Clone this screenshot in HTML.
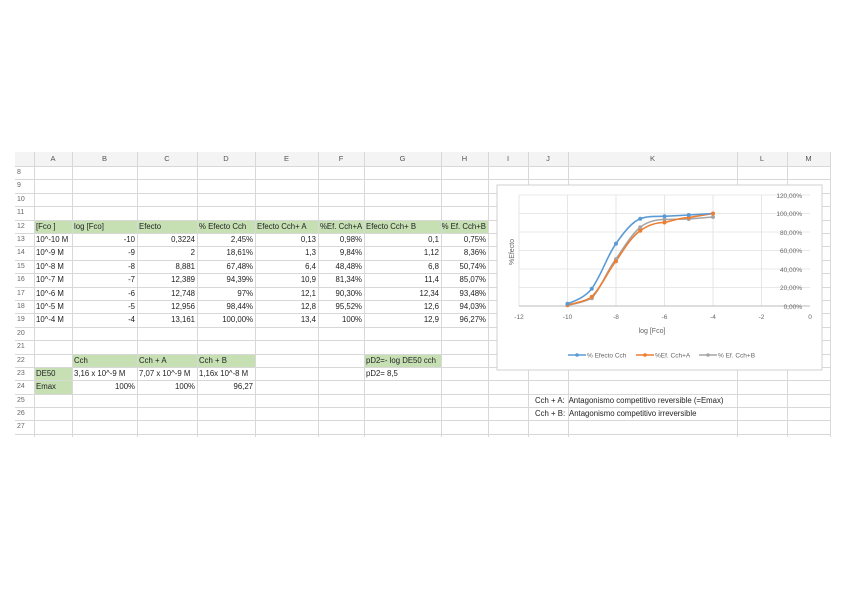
<!DOCTYPE html>
<html><head><meta charset="utf-8"><style>
body{margin:0;width:848px;height:599px;background:#fff;position:relative;overflow:hidden;font-family:"Liberation Sans",sans-serif;color:#222}
.c{position:absolute;height:13px;line-height:13px;font-size:7.8px;white-space:nowrap;overflow:visible}
.r{text-align:right}
.g{position:absolute;background:#c6e0b4}
.v{position:absolute;top:152px;height:285px;width:1px;background:#d8d8d8}
.h{position:absolute;left:15px;width:815px;height:1px;background:#d8d8d8}
.hd{position:absolute;top:152px;height:14px;line-height:14px;font-size:7.5px;color:#555;text-align:center}
.rn{position:absolute;left:15px;width:17px;font-size:7px;color:#666;height:13px;line-height:13px;padding-left:2px}
</style></head><body>
<div style="position:absolute;left:15px;top:152px;width:815px;height:14px;background:#f4f4f4"></div>
<div class="g" style="left:34px;top:220px;width:454px;height:13px"></div>
<div class="g" style="left:72px;top:354px;width:184px;height:13px"></div>
<div class="g" style="left:364px;top:354px;width:77px;height:13px"></div>
<div class="g" style="left:34px;top:367px;width:38px;height:27px"></div>
<div class="v" style="left:34px"></div><div class="v" style="left:72px"></div><div class="v" style="left:137px"></div><div class="v" style="left:197px"></div><div class="v" style="left:255px"></div><div class="v" style="left:318px"></div><div class="v" style="left:364px"></div><div class="v" style="left:441px"></div><div class="v" style="left:488px"></div><div class="v" style="left:528px"></div><div class="v" style="left:568px"></div><div class="v" style="left:737px"></div><div class="v" style="left:787px"></div><div class="v" style="left:830px"></div>
<div class="h" style="top:166px"></div><div class="h" style="top:179px"></div><div class="h" style="top:193px"></div><div class="h" style="top:206px"></div><div class="h" style="top:220px"></div><div class="h" style="top:233px"></div><div class="h" style="top:246px"></div><div class="h" style="top:260px"></div><div class="h" style="top:273px"></div><div class="h" style="top:287px"></div><div class="h" style="top:300px"></div><div class="h" style="top:313px"></div><div class="h" style="top:327px"></div><div class="h" style="top:340px"></div><div class="h" style="top:354px"></div><div class="h" style="top:367px"></div><div class="h" style="top:380px"></div><div class="h" style="top:394px"></div><div class="h" style="top:407px"></div><div class="h" style="top:420px"></div><div class="h" style="top:434px"></div>
<div class="hd" style="left:34px;width:38px">A</div><div class="hd" style="left:72px;width:65px">B</div><div class="hd" style="left:137px;width:60px">C</div><div class="hd" style="left:197px;width:58px">D</div><div class="hd" style="left:255px;width:63px">E</div><div class="hd" style="left:318px;width:46px">F</div><div class="hd" style="left:364px;width:77px">G</div><div class="hd" style="left:441px;width:47px">H</div><div class="hd" style="left:488px;width:40px">I</div><div class="hd" style="left:528px;width:40px">J</div><div class="hd" style="left:568px;width:169px">K</div><div class="hd" style="left:737px;width:50px">L</div><div class="hd" style="left:787px;width:43px">M</div>
<div class="rn" style="top:166px">8</div><div class="rn" style="top:179px">9</div><div class="rn" style="top:193px">10</div><div class="rn" style="top:206px">11</div><div class="rn" style="top:220px">12</div><div class="rn" style="top:233px">13</div><div class="rn" style="top:246px">14</div><div class="rn" style="top:260px">15</div><div class="rn" style="top:273px">16</div><div class="rn" style="top:287px">17</div><div class="rn" style="top:300px">18</div><div class="rn" style="top:313px">19</div><div class="rn" style="top:327px">20</div><div class="rn" style="top:340px">21</div><div class="rn" style="top:354px">22</div><div class="rn" style="top:367px">23</div><div class="rn" style="top:380px">24</div><div class="rn" style="top:394px">25</div><div class="rn" style="top:407px">26</div><div class="rn" style="top:420px">27</div>
<div class="c" style="left:36px;top:220px">[Fco ]</div><div class="c" style="left:74px;top:220px">log [Fco]</div><div class="c" style="left:139px;top:220px">Efecto</div><div class="c" style="left:199px;top:220px">% Efecto Cch</div><div class="c" style="left:257px;top:220px">Efecto Cch+ A</div><div class="c" style="left:320px;top:220px">%Ef. Cch+A</div><div class="c" style="left:366px;top:220px">Efecto Cch+ B</div><div class="c r" style="left:441px;width:45px;top:220px">% Ef. Cch+B</div>
<div class="c" style="left:36px;top:233px">10^-10 M</div><div class="c r" style="left:72px;width:63px;top:233px">-10</div><div class="c r" style="left:137px;width:58px;top:233px">0,3224</div><div class="c r" style="left:197px;width:56px;top:233px">2,45%</div><div class="c r" style="left:255px;width:61px;top:233px">0,13</div><div class="c r" style="left:318px;width:44px;top:233px">0,98%</div><div class="c r" style="left:364px;width:75px;top:233px">0,1</div><div class="c r" style="left:441px;width:45px;top:233px">0,75%</div>
<div class="c" style="left:36px;top:246px">10^-9 M</div><div class="c r" style="left:72px;width:63px;top:246px">-9</div><div class="c r" style="left:137px;width:58px;top:246px">2</div><div class="c r" style="left:197px;width:56px;top:246px">18,61%</div><div class="c r" style="left:255px;width:61px;top:246px">1,3</div><div class="c r" style="left:318px;width:44px;top:246px">9,84%</div><div class="c r" style="left:364px;width:75px;top:246px">1,12</div><div class="c r" style="left:441px;width:45px;top:246px">8,36%</div>
<div class="c" style="left:36px;top:260px">10^-8 M</div><div class="c r" style="left:72px;width:63px;top:260px">-8</div><div class="c r" style="left:137px;width:58px;top:260px">8,881</div><div class="c r" style="left:197px;width:56px;top:260px">67,48%</div><div class="c r" style="left:255px;width:61px;top:260px">6,4</div><div class="c r" style="left:318px;width:44px;top:260px">48,48%</div><div class="c r" style="left:364px;width:75px;top:260px">6,8</div><div class="c r" style="left:441px;width:45px;top:260px">50,74%</div>
<div class="c" style="left:36px;top:273px">10^-7 M</div><div class="c r" style="left:72px;width:63px;top:273px">-7</div><div class="c r" style="left:137px;width:58px;top:273px">12,389</div><div class="c r" style="left:197px;width:56px;top:273px">94,39%</div><div class="c r" style="left:255px;width:61px;top:273px">10,9</div><div class="c r" style="left:318px;width:44px;top:273px">81,34%</div><div class="c r" style="left:364px;width:75px;top:273px">11,4</div><div class="c r" style="left:441px;width:45px;top:273px">85,07%</div>
<div class="c" style="left:36px;top:287px">10^-6 M</div><div class="c r" style="left:72px;width:63px;top:287px">-6</div><div class="c r" style="left:137px;width:58px;top:287px">12,748</div><div class="c r" style="left:197px;width:56px;top:287px">97%</div><div class="c r" style="left:255px;width:61px;top:287px">12,1</div><div class="c r" style="left:318px;width:44px;top:287px">90,30%</div><div class="c r" style="left:364px;width:75px;top:287px">12,34</div><div class="c r" style="left:441px;width:45px;top:287px">93,48%</div>
<div class="c" style="left:36px;top:300px">10^-5 M</div><div class="c r" style="left:72px;width:63px;top:300px">-5</div><div class="c r" style="left:137px;width:58px;top:300px">12,956</div><div class="c r" style="left:197px;width:56px;top:300px">98,44%</div><div class="c r" style="left:255px;width:61px;top:300px">12,8</div><div class="c r" style="left:318px;width:44px;top:300px">95,52%</div><div class="c r" style="left:364px;width:75px;top:300px">12,6</div><div class="c r" style="left:441px;width:45px;top:300px">94,03%</div>
<div class="c" style="left:36px;top:313px">10^-4 M</div><div class="c r" style="left:72px;width:63px;top:313px">-4</div><div class="c r" style="left:137px;width:58px;top:313px">13,161</div><div class="c r" style="left:197px;width:56px;top:313px">100,00%</div><div class="c r" style="left:255px;width:61px;top:313px">13,4</div><div class="c r" style="left:318px;width:44px;top:313px">100%</div><div class="c r" style="left:364px;width:75px;top:313px">12,9</div><div class="c r" style="left:441px;width:45px;top:313px">96,27%</div>
<div class="c" style="left:74px;top:354px">Cch</div><div class="c" style="left:139px;top:354px">Cch + A</div><div class="c" style="left:199px;top:354px">Cch + B</div><div class="c" style="left:366px;top:354px">pD2=- log DE50 cch</div>
<div class="c" style="left:36px;top:367px">DE50</div><div class="c" style="left:74px;top:367px">3,16 x 10^-9 M</div><div class="c" style="left:139px;top:367px">7,07 x 10^-9 M</div><div class="c" style="left:199px;top:367px">1,16x 10^-8 M</div><div class="c" style="left:366px;top:367px">pD2= 8,5</div>
<div class="c" style="left:36px;top:380px">Emax</div><div class="c r" style="left:72px;width:63px;top:380px">100%</div><div class="c r" style="left:137px;width:58px;top:380px">100%</div><div class="c r" style="left:197px;width:56px;top:380px">96,27</div>
<div class="c" style="left:535px;top:394px">Cch + A:&nbsp; Antagonismo competitivo reversible (=Emax)</div>
<div class="c" style="left:535px;top:407px">Cch + B:&nbsp; Antagonismo competitivo irreversible</div>
<svg style="position:absolute;left:0;top:0" width="848" height="599" font-family="Liberation Sans, sans-serif">
<rect x="497" y="185" width="325" height="185" fill="#fff" stroke="#d0d0d0"/>
<g stroke="#e0e0e0" stroke-width="0.8">
<line x1="519" y1="195" x2="810" y2="195"/><line x1="519" y1="213.5" x2="810" y2="213.5"/><line x1="519" y1="232" x2="810" y2="232"/><line x1="519" y1="250.5" x2="810" y2="250.5"/><line x1="519" y1="269" x2="810" y2="269"/><line x1="519" y1="287.5" x2="810" y2="287.5"/>
<line x1="519" y1="195" x2="519" y2="306"/><line x1="567.5" y1="195" x2="567.5" y2="306"/><line x1="616" y1="195" x2="616" y2="306"/><line x1="664.5" y1="195" x2="664.5" y2="306"/><line x1="713" y1="195" x2="713" y2="306"/><line x1="761.5" y1="195" x2="761.5" y2="306"/>
</g>
<line x1="519" y1="306" x2="810" y2="306" stroke="#bbb"/>
<g font-size="6.5" fill="#666" text-anchor="end">
<text x="802" y="198">120,00%</text><text x="802" y="216">100,00%</text><text x="802" y="235">80,00%</text><text x="802" y="253">60,00%</text><text x="802" y="272">40,00%</text><text x="802" y="290">20,00%</text><text x="802" y="309">0,00%</text>
</g>
<g font-size="6.5" fill="#666" text-anchor="middle">
<text x="519" y="319">-12</text><text x="567.5" y="319">-10</text><text x="616" y="319">-8</text><text x="664.5" y="319">-6</text><text x="713" y="319">-4</text><text x="761.5" y="319">-2</text><text x="810" y="319">0</text>
<text x="652" y="333" font-size="7">log [Fco]</text>
<text transform="translate(514,252) rotate(-90)" font-size="7">%Efecto</text>
</g>
<path d="M567.5,305.3 C580,303 588,300 591.75,298.3 C603,285 607,270 616,259.1 C624,247 632,234 640.25,227.3 C648,221 656,219.5 664.5,219.5 L688.75,219 L713,217" fill="none" stroke="#a5a5a5" stroke-width="1.6"/>
<path d="M567.5,305.1 C580,302 588,300 591.75,296.9 C603,285 607,272 616,261.2 C624,249 632,236 640.25,230.8 C648,225 656,222.5 664.5,222.5 C675,220 680,218 688.75,217.6 L713,213.5" fill="none" stroke="#ed7d31" stroke-width="1.6"/>
<path d="M567.5,303.7 C578,300 586,296 591.75,288.8 C603,272 607,256 616,243.6 C624,232 632,222 640.25,218.7 C648,216 656,216.3 664.5,216.3 L688.75,215 L713,213.5" fill="none" stroke="#5b9bd5" stroke-width="1.6"/>
<g fill="#a5a5a5"><circle cx="567.5" cy="305.3" r="2"/><circle cx="591.75" cy="298.3" r="2"/><circle cx="616" cy="259.1" r="2"/><circle cx="640.25" cy="227.3" r="2"/><circle cx="664.5" cy="219.5" r="2"/><circle cx="688.75" cy="219" r="2"/><circle cx="713" cy="217" r="2"/></g>
<g fill="#ed7d31"><circle cx="567.5" cy="305.1" r="2"/><circle cx="591.75" cy="296.9" r="2"/><circle cx="616" cy="261.2" r="2"/><circle cx="640.25" cy="230.8" r="2"/><circle cx="664.5" cy="222.5" r="2"/><circle cx="688.75" cy="217.6" r="2"/><circle cx="713" cy="213.5" r="2"/></g>
<g fill="#5b9bd5"><circle cx="567.5" cy="303.7" r="2"/><circle cx="591.75" cy="288.8" r="2"/><circle cx="616" cy="243.6" r="2"/><circle cx="640.25" cy="218.7" r="2"/><circle cx="664.5" cy="216.3" r="2"/><circle cx="688.75" cy="215" r="2"/></g>
<g font-size="6.5" fill="#666">
<line x1="568" y1="355" x2="586" y2="355" stroke="#5b9bd5" stroke-width="1.5"/><circle cx="577" cy="355" r="1.8" fill="#5b9bd5"/><text x="587" y="357.5">% Efecto Cch</text>
<line x1="636" y1="355" x2="654" y2="355" stroke="#ed7d31" stroke-width="1.5"/><circle cx="645" cy="355" r="1.8" fill="#ed7d31"/><text x="655" y="357.5">%Ef. Cch+A</text>
<line x1="699" y1="355" x2="717" y2="355" stroke="#a5a5a5" stroke-width="1.5"/><circle cx="708" cy="355" r="1.8" fill="#a5a5a5"/><text x="718" y="357.5">% Ef. Cch+B</text>
</g>
</svg>
</body></html>
